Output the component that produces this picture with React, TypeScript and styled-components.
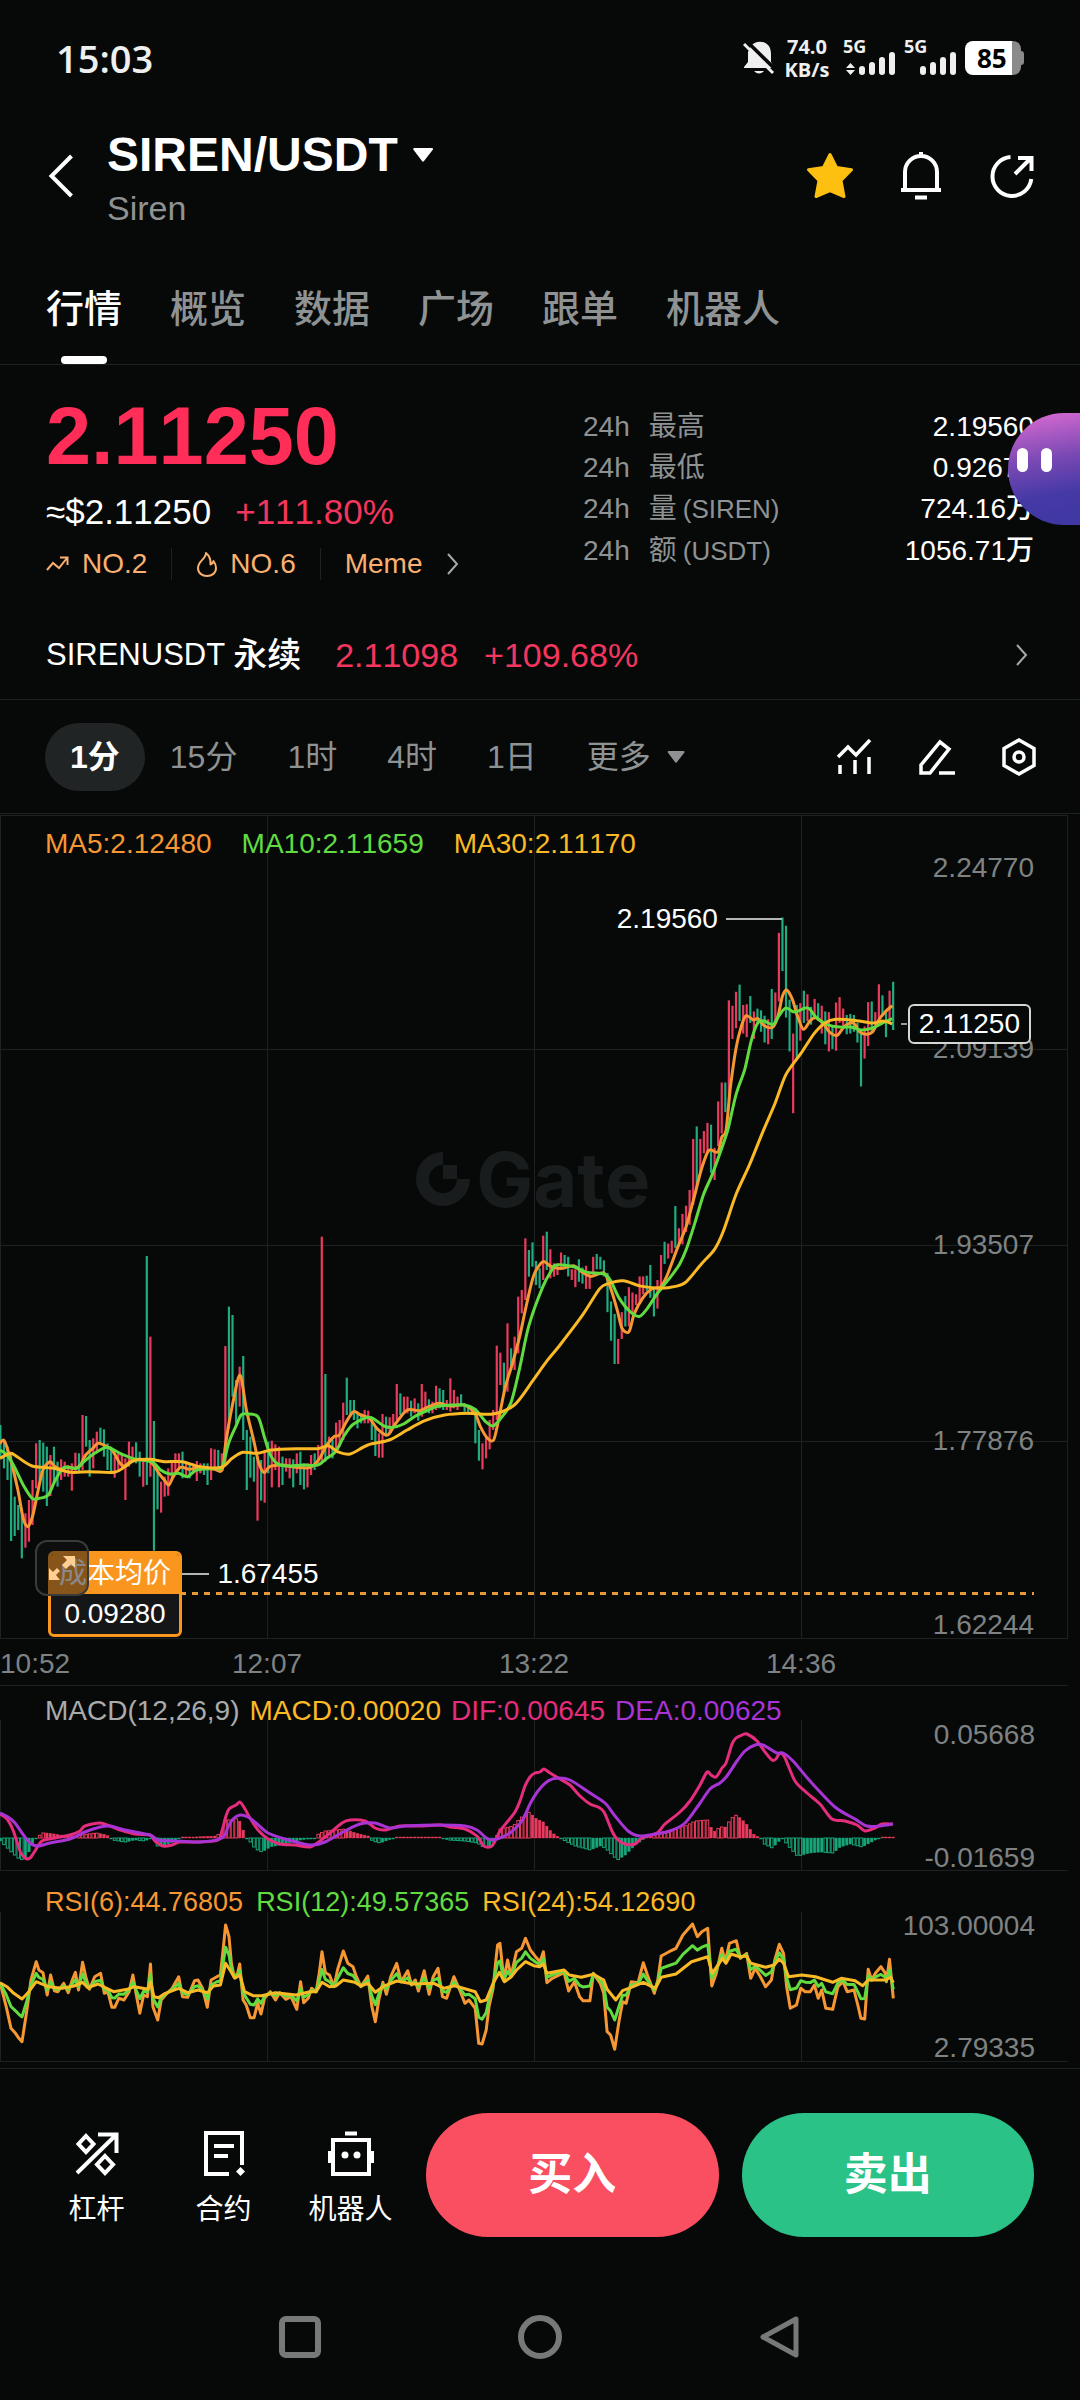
import React from "react";
import styled, { createGlobalStyle, css } from "styled-components";

/* ---------- theme ---------- */

const c = {
  bg: "#060908",
  text: "#ffffff",
  muted: "#8f9293",
  axis: "#7f8283",
  line: "#1e2121",
  rise: "#ff2d57",
  riseSoft: "#f4365e",
  candleUp: "#ea3b5e",
  candleDown: "#20ab80",
  orange: "#fab070",
  ma5: "#f79733",
  ma10: "#62db41",
  ma30: "#fbb926",
  dif: "#e62c7c",
  dea: "#a934d6",
  cost: "#fa961e",
  buy: "#fa4e61",
  sell: "#2bc287",
};

const GlobalStyle = createGlobalStyle`
  * { box-sizing: border-box; }
  body {
    margin: 0;
    background: ${c.bg};
    color: ${c.text};
    font-family: "Liberation Sans", "Noto Sans CJK SC", sans-serif;
    font-kerning: none;
    font-size: 28px;
    line-height: 40px;
  }
  button { font: inherit; font-kerning: inherit; color: inherit; background: none; border: 0; padding: 0; margin: 0; }
  h1, p, dl, dt, dd { margin: 0; font-weight: inherit; font-size: inherit; }
  a { color: inherit; text-decoration: none; }
  svg { display: block; flex: none; }
`;

const Page = styled.div`
  position: relative;
  display: flex;
  flex-direction: column;
  min-height: 100vh;
  overflow: hidden;
`;

/* ---------- status bar ---------- */

const StatusBar = styled.div`
  display: flex;
  align-items: center;
  justify-content: space-between;
  height: 112px;
  padding: 3px 56px 0 56px;
  font-family: "Open Sans", "Noto Sans", sans-serif;
  color: #eeefee;
`;

const Clock = styled.span`
  font-size: 38px;
  font-weight: 600;
`;

const StatusIcons = styled.div`
  display: flex;
  align-items: center;
`;

const NetSpeed = styled.div`
  display: flex;
  flex-direction: column;
  align-items: center;
  width: 48px;
  margin: 0 12px 0 8px;
  font-size: 20px;
  line-height: 23px;
  font-weight: 700;
`;

const Signal = styled.div`
  display: flex;
  flex-direction: column;
  width: 52px;
  margin-right: 9px;
  font-size: 18px;
  line-height: 13px;
  font-weight: 700;
`;

const SignalBars = styled.div`
  display: flex;
  justify-content: flex-end;
  align-items: flex-end;
  gap: 4px;
  height: 22px;
`;

const SignalBar = styled.i<{ $h: number }>`
  width: 6px;
  height: ${(p) => p.$h}px;
  border-radius: 3px;
  background: #eeefee;
`;

const Battery = styled.div`
  display: flex;
  align-items: center;
`;

const BatteryCell = styled.div`
  width: 56px;
  height: 34px;
  padding-left: 12px;
  border-radius: 8px;
  background: linear-gradient(to right, #ffffff 47px, #8a8a8a 47px);
  color: #000;
  font-size: 26px;
  line-height: 34px;
  font-weight: 700;
`;

const BatteryCap = styled.div`
  width: 3px;
  height: 14px;
  border-radius: 0 3px 3px 0;
  background: #8a8a8a;
`;

/* ---------- header ---------- */

const Header = styled.header`
  display: flex;
  align-items: center;
  padding: 11px 44px 0 46px;
`;

const PairBlock = styled.div`
  flex: 1;
  margin-left: 29px;
  padding-top: 4px;
`;

const PairButton = styled.button`
  display: flex;
  align-items: center;
  gap: 15px;
  font-size: 48px;
  line-height: 56px;
  font-weight: 600;
`;

const PairName = styled.p`
  margin-top: 5px;
  font-size: 34px;
  line-height: 40px;
  color: ${c.muted};
`;

const HeaderActions = styled.div`
  display: flex;
  gap: 43px;
`;

/* ---------- tabs ---------- */

const Tabs = styled.nav`
  display: flex;
  gap: 48px;
  padding: 53px 46px 0;
  border-bottom: 1px solid ${c.line};
`;

const Tab = styled.button<{ $active?: boolean }>`
  display: flex;
  flex-direction: column;
  align-items: center;
  gap: 19px;
  font-size: 38px;
  line-height: 56px;
  font-weight: 500;
  color: ${(p) => (p.$active ? c.text : c.muted)};
  &::after {
    content: "";
    width: 46px;
    height: 8px;
    border-radius: 4px;
    background: ${(p) => (p.$active ? "#fff" : "transparent")};
  }
`;

/* ---------- summary ---------- */

const Summary = styled.section`
  display: grid;
  grid-template-columns: minmax(0, 1fr) 451px;
  padding: 31px 46px 31px;
`;

const LastPrice = styled.p`
  font-size: 81px;
  line-height: 80px;
  font-weight: 700;
  color: ${c.rise};
`;

const FiatRow = styled.div`
  display: flex;
  gap: 24px;
  margin-top: 16px;
  font-size: 35px;
  line-height: 40px;
  font-weight: 500;
`;

const Rise = styled.span`
  color: ${c.riseSoft};
`;

const TagRow = styled.div`
  display: flex;
  align-items: center;
  margin-top: 16px;
  line-height: 32px;
  font-weight: 500;
  color: ${c.orange};
`;

const Tag = styled.a`
  display: flex;
  align-items: center;
  gap: 12px;
  & + & {
    margin-left: 24px;
    padding-left: 24px;
    border-left: 1px solid ${c.line};
  }
`;

const Stats = styled.dl`
  padding-top: 10px;
`;

const Stat = styled.div`
  display: flex;
  line-height: 41px;
`;

const StatLabel = styled.dt`
  display: flex;
  gap: 19px;
  flex: 1;
  color: ${c.muted};
`;

const Unit = styled.span`
  margin-left: 6px;
  font-size: 26px;
`;

const StatValue = styled.dd`
  font-weight: 500;
`;

const Perpetual = styled.a`
  display: flex;
  align-items: center;
  gap: 26px;
  height: 89px;
  padding: 0 52px 0 46px;
  border-bottom: 1px solid ${c.line};
  font-size: 34px;
  font-weight: 500;
`;

const PerpetualName = styled.span`
  display: flex;
  gap: 8px;
  margin-right: 8px;
`;

const PerpetualSymbol = styled.span`
  font-size: 31px;
`;

const Spacer = styled.span`
  flex: 1;
`;

/* ---------- timeframe toolbar ---------- */

const Toolbar = styled.div`
  display: flex;
  align-items: center;
  justify-content: space-between;
  height: 114px;
  padding: 0 41px 0 45px;
  border-bottom: 1px solid ${c.line};
`;

const Frames = styled.div`
  display: flex;
  align-items: center;
  font-size: 32px;
`;

const Frame = styled.button<{ $active?: boolean }>`
  display: flex;
  align-items: center;
  gap: 16px;
  height: 68px;
  padding: 0 25px;
  border-radius: 34px;
  color: ${(p) => (p.$active ? c.text : c.muted)};
  background: ${(p) => (p.$active ? "#212424" : "transparent")};
  font-weight: ${(p) => (p.$active ? 600 : 400)};
`;

const Tools = styled.div`
  display: flex;
  gap: 42px;
`;

/* ---------- charts ---------- */

const Charts = styled.section`
  margin: 1px 12px 6px 0;
`;

const panelLine = css`
  border: 1px solid ${c.line};
  border-left: 0;
`;

const Panel = styled.div<{ $h: number; $open?: boolean }>`
  ${panelLine}
  position: relative;
  height: ${(p) => p.$h}px;
  border-top-width: ${(p) => (p.$open ? 0 : 1)}px;
  border-right-width: ${(p) => (p.$open ? 0 : 1)}px;
`;

const Plot = styled.svg`
  position: absolute;
  inset: 0;
  width: 100%;
  height: 100%;
`;

const Legend = styled.div<{ $gap: number; $pad: number; $size?: number }>`
  position: relative;
  display: flex;
  gap: ${(p) => p.$gap}px;
  padding: ${(p) => p.$pad}px 0 0 45px;
  font-size: ${(p) => p.$size ?? 28}px;
  line-height: 32px;
`;

const LegendItem = styled.span<{ $color: string }>`
  color: ${(p) => p.$color};
`;

const AxisLabel = styled.span<{ $y: number }>`
  position: absolute;
  right: 33px;
  top: ${(p) => p.$y - 16}px;
  line-height: 32px;
  color: ${c.axis};
`;

const TimeAxis = styled.div`
  display: grid;
  grid-template-columns: 1fr 2fr 2fr 2fr 1fr;
  height: 47px;
  border-bottom: 1px solid ${c.line};
  line-height: 50px;
  color: ${c.axis};
  text-align: center;
  span:first-child { text-align: left; }
`;

const Callout = styled.span<{ $x: number; $y: number }>`
  position: absolute;
  left: ${(p) => p.$x}%;
  top: ${(p) => p.$y - 16}px;
  display: flex;
  align-items: center;
  gap: 8px;
  line-height: 32px;
`;

const CalloutLine = styled.i<{ $w: number }>`
  width: ${(p) => p.$w}px;
  height: 2px;
  background: #b4b6b6;
`;

const CurrentPrice = styled.span`
  position: absolute;
  right: 36px;
  top: 188px;
  height: 40px;
  padding: 0 9px;
  border: 2px solid #d5d6d6;
  border-radius: 6px;
  background: ${c.bg};
  line-height: 36px;
`;

const Watermark = styled.div`
  position: absolute;
  left: 39%;
  top: 323px;
  display: flex;
  align-items: center;
  gap: 6px;
  color: #191c1c;
  font-family: Inter, sans-serif;
  font-size: 76px;
  line-height: 80px;
  font-weight: 700;
`;

const CostLine = styled.div`
  position: absolute;
  left: 48px;
  right: 33px;
  top: 776px;
  height: 3px;
  background: repeating-linear-gradient(to right, #e8973b 0 6px, transparent 6px 12px);
`;

const CostTag = styled.div`
  position: absolute;
  left: 48px;
  top: 735px;
  width: 134px;
  height: 86px;
  border: 3px solid ${c.cost};
  border-radius: 6px;
  overflow: hidden;
  background: #151617;
  text-align: center;
  line-height: 40px;
`;

const CostTitle = styled.div`
  background: ${c.cost};
  font-size: 28px;
  line-height: 40px;
`;

const ExpandButton = styled.button`
  position: absolute;
  left: 35px;
  top: 724px;
  display: grid;
  place-items: center;
  width: 54px;
  height: 56px;
  border: 2px solid #3a3a3a;
  border-radius: 12px;
  background: rgba(20, 20, 20, 0.5);
`;

/* ---------- bottom ---------- */

const ActionBar = styled.footer`
  display: flex;
  gap: 23px;
  padding: 44px 46px 0 33px;
  border-top: 1px solid ${c.line};
`;

const Shortcuts = styled.div`
  display: flex;
  margin-right: -11px;
  padding-top: 16px;
`;

const Shortcut = styled.a`
  display: flex;
  flex-direction: column;
  align-items: center;
  gap: 13px;
  width: 127px;
  line-height: 40px;
`;

const TradeButton = styled.button<{ $color: string }>`
  flex: 1;
  height: 124px;
  border-radius: 62px;
  background: ${(p) => p.$color};
  font-size: 44px;
  font-weight: 700;
`;

const SystemNav = styled.nav`
  display: flex;
  justify-content: center;
  gap: 196px;
  padding: 78px 0 39px;
`;

const Assistant = styled.button`
  position: absolute;
  right: 0;
  top: 413px;
  display: flex;
  gap: 13px;
  width: 72px;
  height: 112px;
  padding: 35px 0 0 9px;
  border-radius: 56px 0 0 56px;
  background: linear-gradient(170deg, #cb66cd 8%, #7a49b4 42%, #4539a6 72%, #3f37a3);
`;

const Eye = styled.i`
  width: 11px;
  height: 24px;
  border-radius: 6px;
  background: #fff;
`;

/* ---------- chart data ---------- */

type Pt = [number, number];

const pairs = (s: string): Pt[] =>
  s.trim().split(/\s+/).map((p) => p.split(",").map(Number) as Pt);

const place = (s: string, ox: number, oy: number, sx: number, sy: number): Pt[] =>
  pairs(s).map(([x, y]) => [ox + x / sx, oy + y / sy]);

const early = (s: string) => place(s, 0, 364, 2.8, 3);
const late = (s: string) => place(s, 400, 64, 2.306, 2.8);

const path = (pts: Pt[]) => "M" + pts.map(([x, y]) => `${x.toFixed(1)} ${y.toFixed(1)}`).join("L");

const smooth = (pts: Pt[]) => {
  let d = `M${pts[0][0]} ${pts[0][1]}`;
  for (let i = 0; i < pts.length - 1; i++) {
    const a = pts[Math.max(0, i - 1)], b = pts[i], e = pts[i + 1], f = pts[Math.min(pts.length - 1, i + 2)];
    const k = 7;
    d += `C${(b[0] + (e[0] - a[0]) / k).toFixed(1)} ${(b[1] + (e[1] - a[1]) / k).toFixed(1)} ${(e[0] - (f[0] - b[0]) / k).toFixed(1)} ${(e[1] - (f[1] - b[1]) / k).toFixed(1)} ${e[0].toFixed(1)} ${e[1].toFixed(1)}`;
  }
  return d;
};

const lerp = (pts: Pt[], x: number) => {
  const i = pts.findIndex((p) => p[0] >= x);
  if (i < 0) return pts[pts.length - 1][1];
  if (i === 0) return pts[0][1];
  const [x0, y0] = pts[i - 1], [x1, y1] = pts[i];
  return y0 + ((y1 - y0) * (x - x0)) / (x1 - x0 || 1);
};

const STEP = 3.571;

// high-low-direction, one entry per minute
const earlyBars = `735-830g 780-865g 800-900g 820-1083g 950-1068g 975-1050g 985-1135g 1000-1103r 960-1085r 900-1035r
790-925r 780-900g 788-935g 800-978g 825-948r 800-905g 845-920g 838-900r 845-890r 855-890r
850-932r 818-880r 820-880g 705-870r 708-800g 780-890g 775-865r 755-820r 743-790g 748-830g
790-870g 800-880g 830-893r 820-875r 825-865r 835-960r 785-860r 800-840r 787-850g 815-890g
840-920r 228-915g 470-890r 723-1112g 865-988g 905-998r 890-950r 865-947r 840-900r 820-880r
820-870r 815-895g 850-890r 855-895g 850-880r 843-903r 850-880r 850-885g 850-915g 805-900r
808-870r 810-870g 820-870r 498-850r 380-745g 405-650g 600-730g 560-680r 528-780g 750-930g
770-893g 830-905g 830-1022r 840-962g 815-968r 785-880g 782-922r 793-870r 800-922r 830-915g
835-875r 835-895r 838-922g 820-880r 815-915g 850-928g 850-922r 825-885r 820-870g 795-850r
170-850r 582-845g 770-835r 780-835g 728-815r 720-800r 668-780r 593-705g 660-710g 660-720g
695-745g 700-730g 690-730r 692-730r 710-780g 740-828g 760-833r 702-833r 710-770g 712-760r
702-740r 612-720r 640-705g 650-700r 650-700r 662-710g 655-700r 670-722g 612-710r 635-690r
658-700g 665-700r 617-690r 625-685g 630-690g 660-690r 595-695r 630-685r 650-690r 643-680g
670-695g 675-705g 680-700r 685-790g 750-842g 790-868r 770-835r 720-808r 690-750r 497-720r
518-615r 548-640g 430-635r 505-570g 470-570r 350-520r 330-400r 175-360r 210-290g 187-260g
243-315g 265-325g 167-300r 155-270g 208-295r 250-290r 250-285r`;

const lateBars = `1043-1090r 1050-1090g 1055-1110g 1090-1120r 1090-1140r 1062-1125g 1085-1130g 1080-1145r 1100-1145r 1055-1105r
1047-1090g 1055-1090g 1065-1110g 1100-1210g 1180-1290g 1215-1355g 1285-1355r 1210-1285r 1165-1250g 1140-1250r
1155-1215r 1160-1190r 1110-1180r 1110-1160r 1108-1150g 1078-1170g 1140-1222g 1120-1200r 1050-1150r 1013-1075g
1018-1060r 1010-1045r 913-1030g 975-1025r 935-1020r 912-985r 868-965r 725-910r 690-860g 725-820r
703-765r 680-765r 685-820g 750-840r 620-745r 567-710r 567-650g 337-620r 352-445r 313-415r
293-395g 350-430r 348-440r 325-400g 368-445r 360-400g 365-425g 380-455g 390-460r 305-445g
315-400r 148-340r 105-255g 128-385g 335-480g 430-653r 350-500g 345-450r 310-400g 320-395r
355-405g 333-390r 345-395g 352-430r 368-460g 370-480r 410-473g 343-478r 328-400r 360-410r
378-432g 375-430g 378-425g 400-455g 420-578g 410-500r 342-465r 340-425g 370-415r 292-390r
323-380g 370-440g 310-400r 285-420g`;

const parseBars = (s: string, base: number, unit: number) =>
  s.split(/\s+/).map((b) => {
    const [hi, lo] = b.slice(0, -1).split("-").map(Number);
    return { top: base + hi / unit, bottom: base + lo / unit, up: b.endsWith("r") };
  });

const candles = [...parseBars(earlyBars, 364, 3), ...parseBars(lateBars, 64, 2.8)];

const ma5 = [
  ...early(`0,790 12,782 30,840 50,930 65,1015 78,1040 92,1005 105,940 120,870 140,845 152,858 170,868 185,862 210,865 225,855 240,825 260,805 275,790 300,800 315,812 335,848 350,858 370,840 390,838 415,842 430,855 445,880 460,900 473,915 485,890 505,862 530,868 560,862 600,868 622,870 632,790 650,680 672,585 690,690 710,780 725,850 740,878 755,860 790,855 830,862 870,862 895,835 915,795 935,770 950,765 970,725 990,695 1010,705 1035,715 1055,745 1085,765 1105,735 1140,690 1175,692 1200,680 1230,670 1260,678 1300,675 1330,700 1345,740 1365,775 1382,780 1395,725 1415,620 1435,550 1455,470 1475,370 1495,285 1520,245`),
  ...late(`348,1082 370,1088 400,1080 420,1098 440,1110 470,1100 482,1130 500,1200 512,1255 528,1265 540,1215 560,1170 580,1145 600,1140 615,1110 640,1030 660,970 680,880 695,810 712,757 733,762 742,720 752,700 762,580 775,470 787,410 798,380 815,392 825,388 840,408 860,412 872,380 882,325 892,308 905,335 915,375 930,418 945,395 958,385 975,400 990,425 1008,435 1025,410 1045,400 1060,425 1075,432 1090,425 1105,390 1120,368 1135,352`),
];

const ma10 = [
  ...early(`0,810 20,825 40,860 65,915 90,955 110,955 135,945 155,900 180,862 215,865 235,845 265,820 300,802 340,822 380,838 425,845 450,870 475,882 500,880 525,890 550,870 600,865 622,862 640,790 660,740 675,705 690,702 722,710 740,770 755,820 775,850 800,858 850,855 890,855 915,835 940,815 965,765 990,732 1035,712 1075,738 1100,742 1130,732 1160,710 1200,690 1230,678 1300,675 1330,688 1360,725 1380,738 1400,718 1430,670 1455,565 1480,440 1520,320 1545,270`),
  ...late(`360,1078 400,1083 430,1098 470,1103 485,1120 505,1170 530,1208 552,1222 570,1200 595,1155 625,1110 645,1075 660,1035 680,960 700,880 720,825 745,740 757,695 775,600 795,530 810,450 825,400 840,395 860,405 875,378 890,358 910,370 940,358 960,385 985,405 1015,412 1040,412 1065,420 1095,412 1110,402 1135,388`),
];

const ma30 = [
  ...early(`0,835 30,820 50,832 90,858 150,865 200,877 250,875 320,877 350,860 375,842 420,838 460,845 510,845 560,860 620,862 650,835 680,817 720,820 760,810 830,806 890,806 920,797 945,815 980,822 1030,795 1090,780 1140,750 1190,722 1245,705 1310,700 1380,702 1440,675 1490,605 1530,545 1568,495`),
  ...late(`420,1220 460,1145 480,1130 515,1122 555,1137 600,1143 635,1138 660,1125 695,1075 725,1035 745,985 775,880 805,800 835,710 865,625 890,545 925,485 955,430 980,400 1005,390 1050,393 1090,400 1115,395 1135,403`),
];

const dif = place(`0,1813 7,1818 13,1829 20,1850 25,1857 30,1857 35,1850 42,1840 55,1837 70,1834 80,1830 85,1825 100,1822 110,1825 120,1829 135,1833 150,1834 155,1840 163,1845 172,1844 180,1841 200,1841 218,1839 222,1830 226,1815 229,1808 236,1804 240,1801 245,1808 250,1817 258,1829 268,1838 280,1843 295,1844 310,1846 320,1840 330,1832 342,1822 350,1819 365,1820 375,1827 385,1829 400,1825 420,1825 440,1824 450,1826 465,1828 477,1835 484,1845 492,1845 500,1830 508,1820 515,1811 520,1800 525,1785 530,1776 535,1772 540,1771 544,1768 550,1772 560,1778 570,1784 580,1795 590,1803 598,1806 604,1811 612,1830 617,1838 625,1843 635,1843 642,1837 657,1832 665,1823 680,1811 690,1800 700,1784 707,1771 711,1774 716,1776 722,1767 726,1762 732,1743 736,1737 742,1734 747,1733 757,1740 765,1751 772,1759 776,1758 780,1752 785,1757 795,1780 807,1792 820,1803 832,1818 845,1820 857,1824 865,1830 875,1827 882,1823 893,1823`, 0, -1685, 1, 1);

const dea = place(`0,1812 8,1816 15,1822 22,1832 30,1842 38,1845 50,1842 70,1838 85,1831 100,1826 110,1825 125,1829 150,1834 158,1839 175,1840 200,1841 222,1837 228,1826 233,1818 240,1814 248,1816 256,1822 268,1832 285,1838 300,1842 312,1844 325,1841 345,1830 360,1823 375,1822 390,1827 405,1825 440,1824 465,1825 477,1829 488,1838 497,1838 510,1832 522,1820 530,1803 538,1790 548,1780 558,1777 570,1779 590,1792 605,1802 615,1815 628,1830 640,1835 655,1833 670,1830 685,1822 698,1805 710,1788 720,1782 727,1775 737,1760 745,1750 755,1744 763,1744 777,1752 783,1752 793,1760 810,1780 835,1806 855,1818 867,1825 880,1825 893,1823`, 0, -1685, 1, 1);

const histogram = pairs(`0,-3 5,-8 12,-15 20,-22 25,-20 32,-8 36,0 42,5 48,5 60,3 75,2 95,5 103,4 110,1 112,-2 125,-4 135,-2 145,-3 150,0 153,0 157,-8 165,-7 175,-3 180,0 195,1 215,2 221,5 225,18 232,18 238,20 242,10 246,0 250,-4 255,-11 262,-14 270,-9 285,-6 300,-2 315,0 318,4 325,7 345,9 355,5 368,2 372,-3 380,-5 388,-2 395,0 420,1 440,0 448,-2 465,-3 477,-5 483,-9 490,-9 495,0 500,9 513,12 520,20 529,26 535,20 543,16 552,5 560,0 565,-3 575,-8 590,-12 600,-8 605,-10 612,-17 617,-22 625,-17 635,-7 645,0 655,3 670,8 685,12 695,17 707,18 713,6 720,11 726,11 730,19 736,23 742,18 747,13 753,4 760,0 764,-6 772,-10 778,-4 782,0 788,-8 797,-18 810,-15 820,-14 833,-15 840,-9 850,-6 862,-9 875,-2 880,0 893,1`);

const rsiA = (s: string) => place(s, 0, -51, 2.904, 3);
const rsiB = (s: string) => place(s, 540, -51, 2.904, 3);

const rsi6 = [
  ...rsiA(`0,488 8,520 18,560 32,625 45,640 55,655 64,665 78,570 90,480 105,425 113,450 125,458 137,525 147,465 158,512 168,515 185,490 198,518 210,480 219,457 228,510 240,427 250,475 260,508 275,470 292,460 303,520 313,515 325,562 333,562 345,535 360,540 375,515 386,465 395,520 406,580 417,525 428,530 437,432 444,560 458,600 468,540 485,520 500,505 519,470 530,530 545,532 565,482 575,480 588,505 602,562 613,480 630,470 640,465 648,390 655,315 665,350 672,430 680,470 690,460 696,432 706,540 715,555 727,593 738,593 748,550 758,582 768,535 785,515 800,540 812,518 830,538 845,530 862,568 873,485 882,548 895,535 905,505 918,515 927,460 935,395 945,458 957,465 970,500 980,450 997,393 1010,430 1025,440 1035,470 1048,500 1068,468 1080,560 1090,605 1100,540 1112,487 1122,523 1135,470 1152,430 1165,485 1184,452 1195,495 1206,480 1215,513 1232,452 1246,523 1258,470 1272,445 1285,530 1297,535 1318,470 1335,510 1350,550 1362,540 1380,565 1390,670 1400,672 1412,630 1420,560 1432,505 1440,420 1445,375 1452,370 1463,480 1474,420 1484,468 1500,395 1515,385 1526,355 1540,390 1555,410`),
  ...rsiB(`0,425 10,395 20,488 35,475 70,458 83,513 100,485 115,530 125,542 145,542 155,460 175,490 185,520 195,635 205,645 217,688 230,600 240,545 250,550 265,485 285,488 300,428 312,465 332,520 342,480 352,408 375,395 395,385 415,345 443,312 457,350 470,335 487,325 499,498 512,460 528,385 538,425 550,370 570,362 582,415 600,400 612,475 625,445 640,470 655,500 672,480 682,420 695,373 707,400 716,500 727,565 745,555 757,505 770,515 785,515 797,495 808,535 818,510 830,565 850,568 865,500 880,485 892,515 912,510 923,555 932,595 943,597 953,448 963,480 975,458 990,440 1003,460 1006,485 1015,418 1026,535`),
];

const rsi24 = [
  ...rsiA(`0,488 20,500 40,520 64,537 80,520 105,485 140,500 180,505 215,498 240,487 255,503 285,492 310,505 330,515 370,508 390,500 430,508 437,485 447,530 460,533 480,520 519,505 545,518 575,510 602,518 620,498 640,495 655,430 668,450 682,475 697,465 710,515 735,527 760,527 800,518 860,525 900,515 918,515 935,487 957,500 975,498 997,480 1030,487 1048,498 1068,490 1090,517 1112,500 1152,483 1200,492 1260,490 1290,505 1320,497 1345,505 1380,515 1395,545 1412,540 1432,490 1450,457 1465,485 1485,470 1500,450 1526,425 1550,437`),
  ...rsiB(`0,440 10,432 20,460 70,450 85,465 120,472 155,463 185,480 195,508 220,540 240,512 265,502 300,487 335,505 352,472 395,462 440,425 487,410 500,460 530,415 540,430 555,402 580,410 600,408 612,430 655,442 680,435 695,417 707,430 722,470 760,465 800,470 850,487 875,475 915,482 937,497 953,480 1003,480 1018,472 1026,488`),
];

const rsi12: Pt[] = rsi6.map(([x, y]) => {
  const slow = lerp(rsi24, x);
  return [x, slow + (y - slow) * 0.42];
});

/* ---------- chart drawings ---------- */

const Grid = ({ top, bottom }: { top: number; bottom: number }) => (
  <g stroke={c.line} strokeWidth="1">
    {[0.5, 267.5, 534.5, 801.5].map((x) => (
      <line key={x} x1={x} x2={x} y1={top} y2={bottom} />
    ))}
  </g>
);

const Curve = ({ d, color }: { d: string; color: string }) => (
  <path d={d} stroke={color} strokeWidth="3" fill="none" strokeLinejoin="round" />
);

const PricePlot = () => (
  <Plot viewBox="0 0 1067 822" preserveAspectRatio="none" aria-hidden>
    <Grid top={0} bottom={822} />
    <g stroke={c.line}>
      {[233.5, 429.5, 625.5].map((y) => (
        <line key={y} x1="0" x2="1067" y1={y} y2={y} />
      ))}
    </g>
    {candles.map((k, i) => (
      <rect key={i} x={i * STEP - 0.7} y={k.top} width="2.2" height={k.bottom - k.top} fill={k.up ? c.candleUp : c.candleDown} />
    ))}
    <Curve d={smooth(ma5)} color={c.ma5} />
    <Curve d={smooth(ma10)} color={c.ma10} />
    <Curve d={smooth(ma30)} color={c.ma30} />
    <line x1="901" x2="907" y1="208" y2="208" stroke="#9a9c9c" strokeWidth="2" />
  </Plot>
);

const MacdPlot = () => (
  <Plot viewBox="0 0 1068 184" preserveAspectRatio="none" aria-hidden>
    <Grid top={34} bottom={184} />
    {Array.from({ length: 251 }, (_, i) => {
      const h = lerp(histogram, i * STEP);
      const prev = lerp(histogram, (i - 1) * STEP);
      const size = Math.max(1, Math.abs(h));
      const color = h >= 0 ? c.candleUp : "#17a67a";
      const hollow = Math.abs(h) > Math.abs(prev) && size > 2;
      return (
        <rect
          key={i}
          x={i * STEP - 0.9}
          y={h >= 0 ? 152 - size : 152}
          width="2.6"
          height={size}
          fill={hollow ? c.bg : color}
          stroke={color}
          strokeWidth={hollow ? 1 : 0.4}
        />
      );
    })}
    <Curve d={smooth(dif)} color={c.dif} />
    <Curve d={smooth(dea)} color={c.dea} />
  </Plot>
);

const RsiPlot = () => (
  <Plot viewBox="0 0 1068 190" preserveAspectRatio="none" aria-hidden>
    <Grid top={41} bottom={190} />
    <Curve d={path(rsi6)} color={c.ma5} />
    <Curve d={path(rsi12)} color={c.ma10} />
    <Curve d={path(rsi24)} color={c.ma30} />
  </Plot>
);

/* ---------- icons ---------- */

const Chevron = ({ w = 12, h = 22, color = "#a6a8a9" }) => (
  <svg width={w} height={h} viewBox="0 0 12 22" fill="none" stroke={color} strokeWidth="2">
    <path d="M1 1l9 10-9 10" />
  </svg>
);

const Caret = ({ w, h, color }: { w: number; h: number; color: string }) => (
  <svg width={w} height={h} viewBox="0 0 20 14">
    <path d="M1 0h18q1.500.500 1 1.500L11 13q-1 1.300-2 0L.300 1.500Q0 .500 1 0z" fill={color} />
  </svg>
);

const BackIcon = () => (
  <svg width="32" height="44" viewBox="0 0 32 44" fill="none" stroke="#fff" strokeWidth="4">
    <path d="M25.500 2L5.500 22l20 20" />
  </svg>
);

const StarIcon = () => (
  <svg width="48" height="48" viewBox="0 0 48 48">
    <path
      d="M24 2.500l6.500 13 15 2.200L35 28.500l3 16L24 38.500l-14 6 3-16L2.500 17.700l15-2.200z"
      fill="#fdc010"
      stroke="#fdc010"
      strokeWidth="3"
      strokeLinejoin="round"
    />
  </svg>
);

const BellIcon = () => (
  <svg width="48" height="48" viewBox="0 0 48 48" fill="none" stroke="#fff" strokeWidth="4">
    <path d="M8 38V20a16 16 0 0 1 32 0v18M4 38h40M24 0v6M18 45.500h12" />
  </svg>
);

const ShareIcon = () => (
  <svg width="48" height="48" viewBox="0 0 48 48" fill="none" stroke="#fff" strokeWidth="4">
    <path d="M22.500 5A19.500 19.500 0 1 0 43.300 27M27 22L43 6M30 6h13.500v13" />
  </svg>
);

const BellOffIcon = () => (
  <svg width="32" height="36" viewBox="0 0 32 36">
    <path d="M8 6C12-.500 28-1 28 14v8l3 5v1H1v-1l4-5V12z" fill="#eeefee" />
    <path d="M11 31h10q-5 5-10 0z" fill="#eeefee" />
    <path d="M3.500 1L33 30" stroke={c.bg} strokeWidth="3.500" />
    <path d="M1 4l29 29" stroke="#eeefee" strokeWidth="3" />
  </svg>
);

const TrendIcon = () => (
  <svg width="24" height="20" viewBox="0 0 24 20" fill="none" stroke={c.orange} strokeWidth="2">
    <path d="M1 16l6-7 6 5 8-10M14 3.500h7.500V11" />
  </svg>
);

const FlameIcon = () => (
  <svg width="22" height="26" viewBox="0 0 22 26" fill="none" stroke={c.orange} strokeWidth="2" strokeLinejoin="round">
    <path d="M10 2c0 6-8 8-8 15 0 5 4 8 9 8s9-3 9-8c0-3-1-5-2.500-7-.5 2-1.500 3-3 3.500C15 8 13 4.500 10 2z" />
  </svg>
);

const IndicatorIcon = () => (
  <svg width="40" height="40" viewBox="0 0 40 40" fill="none" stroke="#fff" strokeWidth="3.500">
    <path d="M3 20l10-10 8 8L35 3M5 28v9M20 23v14M34 20v17" />
  </svg>
);

const PencilIcon = () => (
  <svg width="40" height="40" viewBox="0 0 40 40" fill="none" stroke="#fff" strokeWidth="3.500">
    <path d="M4 36v-8L23 5l9 7-19 24zM22 36h16" />
  </svg>
);

const HexIcon = () => (
  <svg width="40" height="40" viewBox="0 0 40 40" fill="none" stroke="#fff" strokeWidth="3.500">
    <path d="M20 3l15 8.500v17L20 37 5 28.500v-17z" />
    <circle cx="20" cy="20" r="5" />
  </svg>
);

const GateMark = () => (
  <svg width="54" height="54" viewBox="0 0 54 54" fill="none">
    <path d="M27 6.500A20.500 20.500 0 1 0 47.500 27" stroke="#191c1c" strokeWidth="13" />
    <path d="M27 13h14v14H27z" fill="#191c1c" />
  </svg>
);

const ExpandIcon = () => (
  <svg width="28" height="28" viewBox="0 0 28 28" fill="#ffcf94">
    <path d="M15 2h12v12l-4-4-5 5-4-4 5-5zM1 14l4 4 4-4 3 3-4 4 4 5H1z" />
  </svg>
);

const LeverageIcon = () => (
  <svg width="48" height="48" viewBox="0 0 48 48" fill="none" stroke="#fff" strokeWidth="4">
    <path d="M4 44L43 6M25 5.500h18.500V24M13 7l7.500 8L13 23l-7.500-8zM32 27l8 8.500-8 8.500-8-8.500z" />
  </svg>
);

const ContractIcon = () => (
  <svg width="48" height="48" viewBox="0 0 48 48" fill="none" stroke="#fff" strokeWidth="4">
    <path d="M29 45H6V4h36v32M14 17h20M14 27h14" />
    <path d="M40.500 38l4.500 4.500-4.500 4.500-4.500-4.500z" fill="#fff" stroke="none" />
  </svg>
);

const RobotIcon = () => (
  <svg width="48" height="48" viewBox="0 0 48 48" fill="none" stroke="#fff" strokeWidth="4">
    <path d="M6 11h36v34H6zM18 4.500h12M3 22v12M45 22v12" />
    <circle cx="18" cy="26" r="3.500" fill="#fff" stroke="none" />
    <circle cx="30" cy="26" r="3.500" fill="#fff" stroke="none" />
  </svg>
);

const DataArrows = () => (
  <svg width="9" height="12" viewBox="0 0 9 12" fill="#eeefee">
    <path d="M4.500 0L9 5H0zM0 7h9l-4.500 5z" />
  </svg>
);

/* ---------- page ---------- */

const tabs = ["行情", "概览", "数据", "广场", "跟单", "机器人"];
const frames = ["1分", "15分", "1时", "4时", "1日"];
const stats = [
  { label: "最高", value: "2.19560" },
  { label: "最低", value: "0.92670" },
  { label: "量", unit: "(SIREN)", value: "724.16万" },
  { label: "额", unit: "(USDT)", value: "1056.71万" },
];

const MobileSignal = ({ data }: { data?: boolean }) => (
  <Signal>
    5G
    <SignalBars>
      {data && <DataArrows />}
      {[9, 13, 18, 23].map((h) => (
        <SignalBar key={h} $h={h} />
      ))}
    </SignalBars>
  </Signal>
);

export default function App() {
  return (
    <Page>
      <GlobalStyle />
      <StatusBar>
        <Clock>15:03</Clock>
        <StatusIcons>
          <BellOffIcon />
          <NetSpeed>
            <span>74.0</span>
            <span>KB/s</span>
          </NetSpeed>
          <MobileSignal data />
          <MobileSignal />
          <Battery>
            <BatteryCell>85</BatteryCell>
            <BatteryCap />
          </Battery>
        </StatusIcons>
      </StatusBar>

      <Header>
        <button aria-label="返回"><BackIcon /></button>
        <PairBlock>
          <h1>
            <PairButton>
              SIREN/USDT <Caret w={20} h={14} color="#fff" />
            </PairButton>
          </h1>
          <PairName>Siren</PairName>
        </PairBlock>
        <HeaderActions>
          <button aria-label="收藏"><StarIcon /></button>
          <button aria-label="提醒"><BellIcon /></button>
          <button aria-label="分享"><ShareIcon /></button>
        </HeaderActions>
      </Header>

      <Tabs>
        {tabs.map((t, i) => (
          <Tab key={t} $active={i === 0}>{t}</Tab>
        ))}
      </Tabs>

      <Summary>
        <div>
          <LastPrice>2.11250</LastPrice>
          <FiatRow>
            <span>≈$2.11250</span>
            <Rise>+111.80%</Rise>
          </FiatRow>
          <TagRow>
            <Tag href="#gainers"><TrendIcon />NO.2</Tag>
            <Tag href="#hot"><FlameIcon />NO.6</Tag>
            <Tag href="#meme">Meme <Spacer /><Chevron /></Tag>
          </TagRow>
        </div>
        <Stats>
          {stats.map((s) => (
            <Stat key={s.label}>
              <StatLabel>
                <span>24h</span>
                <span>{s.label}{s.unit && <Unit>{s.unit}</Unit>}</span>
              </StatLabel>
              <StatValue>{s.value}</StatValue>
            </Stat>
          ))}
        </Stats>
      </Summary>

      <Perpetual href="#perpetual">
        <PerpetualName>
          <PerpetualSymbol>SIRENUSDT</PerpetualSymbol>
          <span>永续</span>
        </PerpetualName>
        <Rise>2.11098</Rise>
        <Rise>+109.68%</Rise>
        <Spacer />
        <Chevron />
      </Perpetual>

      <Toolbar>
        <Frames>
          {frames.map((f, i) => (
            <Frame key={f} $active={i === 0}>{f}</Frame>
          ))}
          <Frame>更多 <Caret w={18} h={12} color={c.muted} /></Frame>
        </Frames>
        <Tools>
          <button aria-label="指标"><IndicatorIcon /></button>
          <button aria-label="画线"><PencilIcon /></button>
          <button aria-label="设置"><HexIcon /></button>
        </Tools>
      </Toolbar>

      <Charts>
        <Panel $h={824}>
          <Watermark><GateMark />Gate</Watermark>
          <PricePlot />
          <Legend $gap={30} $pad={12}>
            <LegendItem $color={c.ma5}>MA5:2.12480</LegendItem>
            <LegendItem $color={c.ma10}>MA10:2.11659</LegendItem>
            <LegendItem $color={c.ma30}>MA30:2.11170</LegendItem>
          </Legend>
          <AxisLabel $y={52}>2.24770</AxisLabel>
          <AxisLabel $y={233}>2.09139</AxisLabel>
          <AxisLabel $y={429}>1.93507</AxisLabel>
          <AxisLabel $y={625}>1.77876</AxisLabel>
          <AxisLabel $y={809}>1.62244</AxisLabel>
          <Callout $x={57.8} $y={103}>2.19560<CalloutLine $w={56} /></Callout>
          <Callout $x={17} $y={758}><CalloutLine $w={28} />1.67455</Callout>
          <CurrentPrice>2.11250</CurrentPrice>
          <CostLine />
          <CostTag>
            <CostTitle>成本均价</CostTitle>
            0.09280
          </CostTag>
          <ExpandButton aria-label="全屏"><ExpandIcon /></ExpandButton>
        </Panel>
        <TimeAxis>
          <span>10:52</span>
          <span>12:07</span>
          <span>13:22</span>
          <span>14:36</span>
        </TimeAxis>
        <Panel $h={185} $open>
          <MacdPlot />
          <Legend $gap={10} $pad={9}>
            <LegendItem $color="#a9abac">MACD(12,26,9)</LegendItem>
            <LegendItem $color={c.ma30}>MACD:0.00020</LegendItem>
            <LegendItem $color={c.dif}>DIF:0.00645</LegendItem>
            <LegendItem $color={c.dea}>DEA:0.00625</LegendItem>
          </Legend>
          <AxisLabel $y={49}>0.05668</AxisLabel>
          <AxisLabel $y={172}>-0.01659</AxisLabel>
        </Panel>
        <Panel $h={191} $open>
          <RsiPlot />
          <Legend $gap={13} $pad={15} $size={27}>
            <LegendItem $color={c.ma5}>RSI(6):44.76805</LegendItem>
            <LegendItem $color={c.ma10}>RSI(12):49.57365</LegendItem>
            <LegendItem $color={c.ma30}>RSI(24):54.12690</LegendItem>
          </Legend>
          <AxisLabel $y={55}>103.00004</AxisLabel>
          <AxisLabel $y={177}>2.79335</AxisLabel>
        </Panel>
      </Charts>

      <ActionBar>
        <Shortcuts>
          <Shortcut href="#leverage"><LeverageIcon />杠杆</Shortcut>
          <Shortcut href="#contract"><ContractIcon />合约</Shortcut>
          <Shortcut href="#robot"><RobotIcon />机器人</Shortcut>
        </Shortcuts>
        <TradeButton $color={c.buy}>买入</TradeButton>
        <TradeButton $color={c.sell}>卖出</TradeButton>
      </ActionBar>

      <SystemNav>
        <button aria-label="最近任务">
          <svg width="44" height="44" viewBox="0 0 44 44" fill="none" stroke="#777979" strokeWidth="6">
            <rect x="4" y="4" width="36" height="36" rx="4" />
          </svg>
        </button>
        <button aria-label="主页">
          <svg width="44" height="44" viewBox="0 0 44 44" fill="none" stroke="#777979" strokeWidth="6">
            <circle cx="22" cy="22" r="19" />
          </svg>
        </button>
        <button aria-label="后退">
          <svg width="44" height="44" viewBox="0 0 44 44" fill="none" stroke="#777979" strokeWidth="5" strokeLinejoin="round">
            <path d="M38 4v36L5 22z" />
          </svg>
        </button>
      </SystemNav>

      <Assistant aria-label="助手">
        <Eye />
        <Eye />
      </Assistant>
    </Page>
  );
}
